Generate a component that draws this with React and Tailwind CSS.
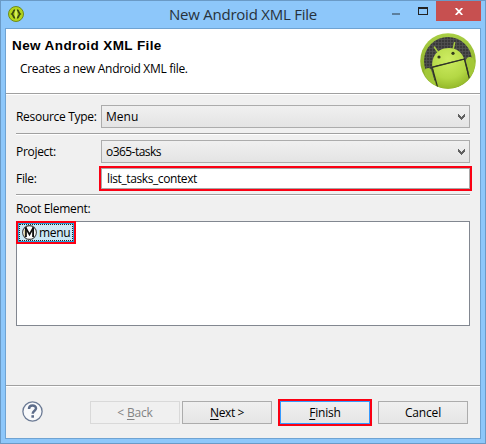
import React from "react";

const face = "font-['Open_Sans','Noto_Sans',sans-serif] text-[12px] leading-[16px] whitespace-nowrap";
const ui = face + " tracking-[-0.3px]";

function Rule({ className = "" }) {
  return <div className={"h-[2px] shrink-0 border-t border-[#a0a0a0] bg-white " + className} />;
}

function Select({ children }) {
  return (
    <div className="flex h-[23px] w-[369px] items-center justify-between border border-[#acacac] bg-linear-to-b from-[#f0f0f0] to-[#e4e4e4] pl-1 pr-[4px]">
      {children}
      <svg width="7" height="6" viewBox="0 0 7 6" shapeRendering="crispEdges">
        <path d="M0 0h1v1h1v1h1v1h1v-1h1v-1h1v-1h1v3h-1v1h-1v1h-1v1h-1v-1h-1v-1h-1v-1h-1z" fill="#606060" />
      </svg>
    </div>
  );
}

function AppIcon() {
  return (
    <svg width="16" height="16" viewBox="0 0 16 16">
      <circle cx="8" cy="8" r="7.5" fill="#b4d51c" stroke="#6d8a1c" />
      <path d="M7 4.200C5 4.200 5.800 6.800 4 8C5.800 9.200 5 11.800 7 11.800M9 4.200C11 4.200 10.200 6.800 12 8C10.200 9.200 11 11.800 9 11.800" fill="none" stroke="#3c4a10" strokeWidth="1.700" />
      <path d="M8 4.500v7" stroke="#e4f579" strokeWidth="1.400" />
    </svg>
  );
}

function AndroidLogo() {
  return (
    <svg width="56" height="56" viewBox="0 0 56 56">
      <defs>
        <linearGradient id="rim" x1="0" y1="0" x2="0" y2="1">
          <stop offset="0" stopColor="#a9cf45" />
          <stop offset="1" stopColor="#84a51f" />
        </linearGradient>
        <radialGradient id="body" gradientUnits="userSpaceOnUse" cx="28" cy="26" r="32">
          <stop offset="0" stopColor="#cdec62" />
          <stop offset="0.6" stopColor="#b4d845" />
          <stop offset="1" stopColor="#8eb224" />
        </radialGradient>
        <pattern id="mesh" width="3" height="3" patternUnits="userSpaceOnUse">
          <rect width="3" height="3" fill="#3a3a3a" />
          <path d="M0 .5h3M.5 0v3" stroke="#525252" strokeWidth="0.800" />
        </pattern>
        <clipPath id="disc"><circle cx="28" cy="28" r="27.500" /></clipPath>
      </defs>
      <circle cx="28" cy="28" r="27.800" fill="url(#rim)" />
      <circle cx="28" cy="28" r="24" fill="url(#mesh)" />
      <g clipPath="url(#disc)">
        <path d="M12.200 33.500C11.500 24.500 16 17.500 24 15.500C33 13.300 41 17 44 25.500Z" fill="url(#body)" />
        <path d="M17.500 18.500L14.300 14M33.300 15.500L34.600 9.800" stroke="#a9cd40" strokeWidth="1.500" strokeLinecap="round" />
        <circle cx="19" cy="24" r="1.600" fill="#343b1c" />
        <circle cx="33" cy="20.300" r="1.600" fill="#343b1c" />
        <path d="M12.700 34.500L44.300 26.500L51 56H17z" fill="url(#body)" />
        <path d="M4 38C6 34.500 10 34 11.500 37.500L17 56H8z" fill="#a3c838" />
        <path d="M45.800 28C46 23.500 51 23 53.500 26L57 38L51 48z" fill="#a3c838" />
        <path d="M12 34.300L45 26M12.500 35.500L17.500 54M44.500 26.500L49.500 46" stroke="#2f3422" strokeWidth="1.200" fill="none" />
      </g>
    </svg>
  );
}

function MenuIcon() {
  return (
    <svg width="15" height="15" viewBox="0 0 15 15">
      <circle cx="7.500" cy="7.500" r="6.900" fill="#fff" stroke="#444" strokeWidth="1.100" />
      <path d="M3.900 12V2.500M11.100 12V2.500" fill="none" stroke="#111" strokeWidth="1.900" />
      <path d="M3.600 2.500L7.500 9.500L11.400 2.500" fill="none" stroke="#111" strokeWidth="1.600" />
      <path d="M2.700 5v6" stroke="#c9b155" strokeWidth="0.600" />
    </svg>
  );
}

function HelpIcon() {
  return (
    <svg width="21" height="21" viewBox="0 0 21 21">
      <circle cx="10.500" cy="10.500" r="9.600" fill="#f8f9fb" stroke="#6c7b95" strokeWidth="1.300" />
      <path d="M7 8C7 3.300 14.200 3.600 14 7.500C13.900 9.700 10.700 9.800 10.700 12.700" fill="none" stroke="#5c6c8a" strokeWidth="2.500" />
      <rect x="9.400" y="14.200" width="2.600" height="2.500" fill="#5c6c8a" />
    </svg>
  );
}

const btn = "flex h-[23px] w-[90px] items-center justify-center border " + face;

export default function App() {
  return (
    <div className="flex h-[444px] w-[486px] flex-col overflow-hidden border border-[#6a9ac6] bg-[#8dc7fa] text-black">
      <header className="flex h-[27px] shrink-0 items-start">
        <div className="w-[160px] pl-[7px] pt-[5px]"><AppIcon /></div>
        <h1 className="w-[164px] pt-[3px] text-center font-['Open_Sans',sans-serif] text-[15px] leading-5 whitespace-nowrap text-[#27323c] tracking-[-0.24px]">
          New Android XML File
        </h1>
        <div className="ml-[67px] mt-[12px] h-[2px] w-2 bg-[#5c7f9d]" />
        <div className="ml-[18px] mt-[6px] h-2 w-[10px] border border-t-2 border-[#222]" />
        <div className="ml-[8px] flex h-5 w-[45px] items-center justify-center bg-[#c75050]">
          <svg width="8" height="7" viewBox="0 0 8 7">
            <path d="M.7 0L7.300 7M7.300 0L.7 7" stroke="#fff" strokeWidth="1.800" />
          </svg>
        </div>
      </header>

      <main className="ml-1 flex h-[411px] w-[476px] flex-col border border-[#6fa3d2] bg-[#f0f0f0]">
        <section className="flex h-[64px] shrink-0 justify-between bg-white pl-[6px] pr-[4px] pt-[4px]">
          <div>
            <h2 className="pt-[5px] font-['Liberation_Sans',sans-serif] text-[13.5px] leading-[16px] font-bold whitespace-nowrap tracking-[0.4px]">
              New Android XML File
            </h2>
            <p className={"pt-[7px] pl-2 " + ui}>Creates a new Android XML file.</p>
          </div>
          <AndroidLogo />
        </section>
        <Rule />

        <div className="flex flex-col pl-[10px]">
          <div className="mt-[10px] flex items-center">
            <label className={"w-[85px] " + ui}>Resource Type:</label>
            <Select><span className={face}>Menu</span></Select>
          </div>
          <Rule className="mt-[5px] w-[454px]" />
          <div className="mt-[5px] flex items-center">
            <label className={"w-[85px] " + ui}>Project:</label>
            <Select><span className={face + " tracking-[-0.55px]"}>o365-tasks</span></Select>
          </div>
          <div className="mt-[3px] flex items-center">
            <label className={"w-[83px] " + ui}>File:</label>
            <div className="h-[25px] w-[373px] border-2 border-[#fb0013]">
              <div className="flex h-full items-center border border-[#a8a8a8] bg-white pl-[5px]">
                <span className={face + " tracking-[-0.4px]"}>list_tasks_context</span>
              </div>
            </div>
          </div>
          <Rule className="mt-[3px] w-[454px]" />
          <label className={"mt-[5px] h-[20px] " + ui}>Root Element:</label>
          <div className="h-[105px] w-[454px] border border-[#828790] bg-white">
            <div className="-mt-px -ml-px h-[23px] w-[60px] border-2 border-[#fb0013]">
              <div className="h-full border border-[#26a0da]">
                <div className="flex h-full items-center border border-dotted border-[#222] bg-[#cbe8f6] pl-[2px]">
                  <MenuIcon />
                  <span className={"ml-[2px] " + ui}>menu</span>
                </div>
              </div>
            </div>
          </div>
        </div>

        <Rule className="mt-[59px]" />
        <footer className="flex h-[51px] items-center pl-[16px]">
          <div className="-mt-[2px]"><HelpIcon /></div>
          <div className={"ml-[47px] border-[#d9d9d9] text-[#838383] tracking-[-0.2px] " + btn}>
            <span>&lt; <u className="underline-offset-2">B</u>ack</span>
          </div>
          <div className={"ml-[2px] border-[#acacac] bg-linear-to-b from-[#f0f0f0] to-[#e5e5e5] tracking-[-0.4px] " + btn}>
            <span><u className="underline-offset-2">N</u>ext &gt;</span>
          </div>
          <div className="ml-[6px] border-2 border-[#fb0013]">
            <div className={"border-[#3399ff] bg-linear-to-b from-[#f0f0f0] to-[#e5e5e5] tracking-[-0.2px] " + btn}>
              <span><u className="underline-offset-2">F</u>inish</span>
            </div>
          </div>
          <div className={"ml-[6px] border-[#acacac] bg-linear-to-b from-[#f0f0f0] to-[#e5e5e5] tracking-[-0.15px] " + btn}>Cancel</div>
        </footer>
      </main>
    </div>
  );
}
